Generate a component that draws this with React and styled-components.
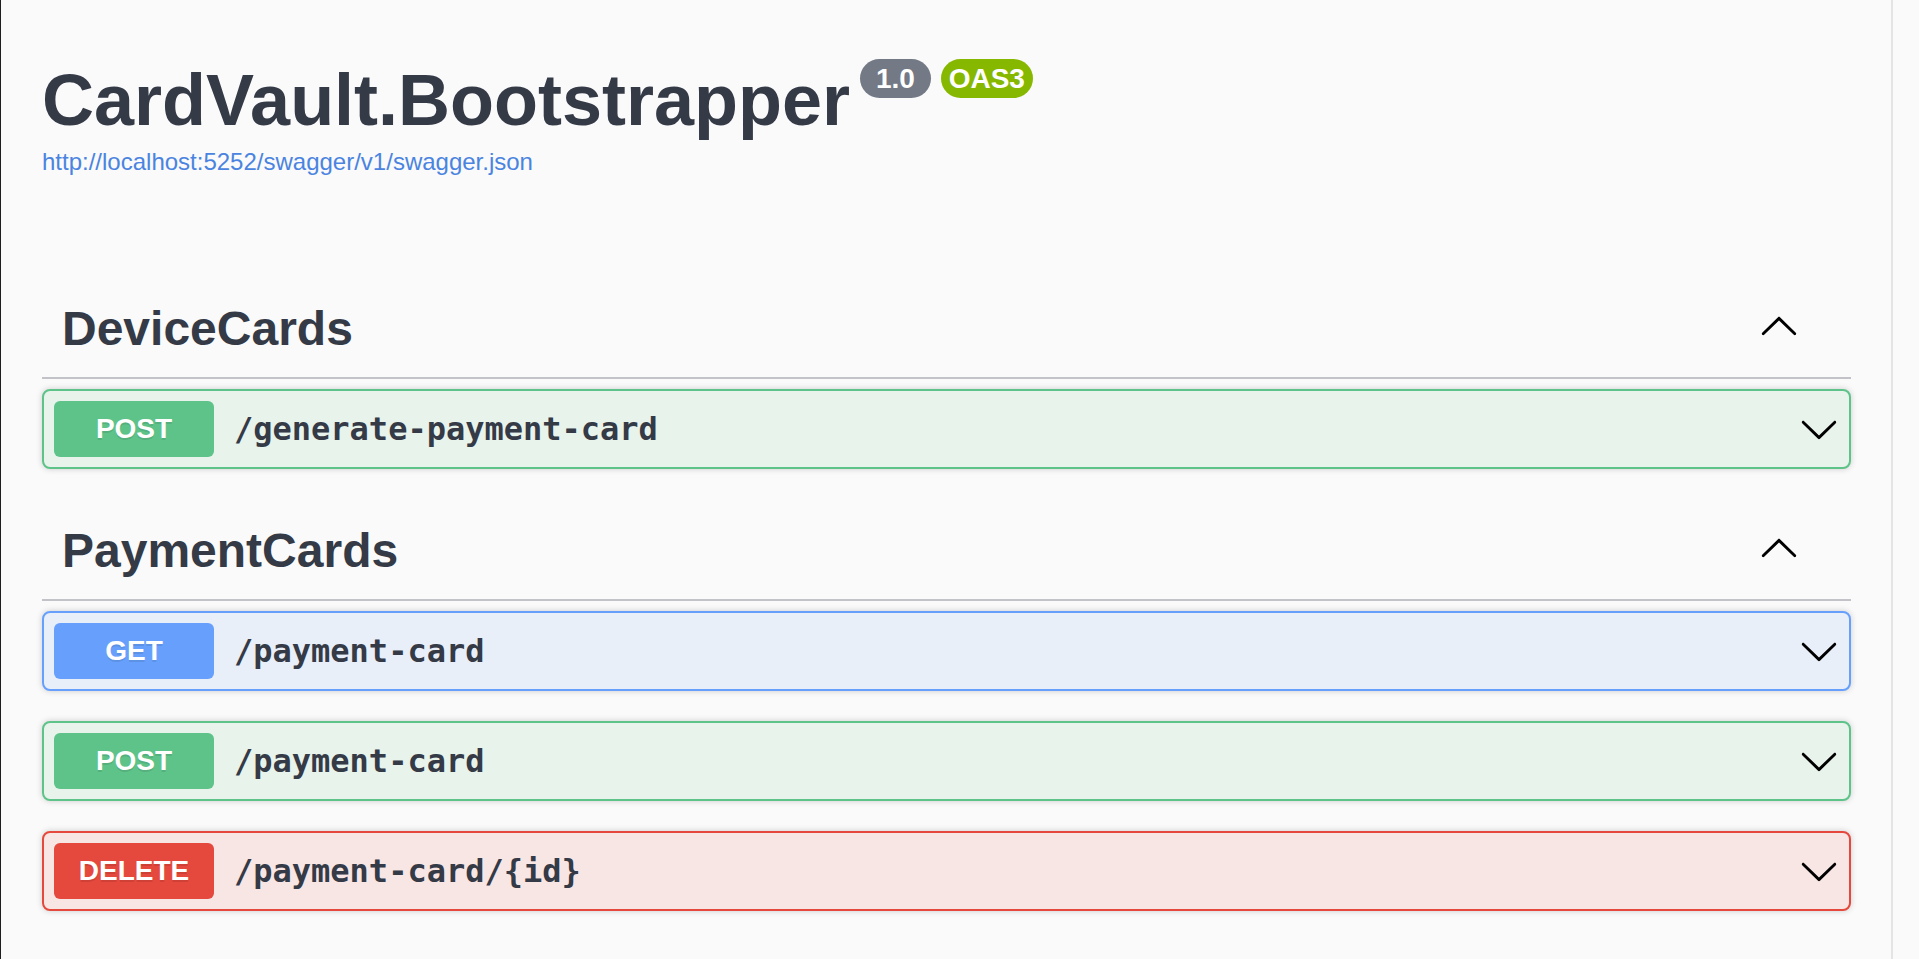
import React from "react";
import styled, { createGlobalStyle } from "styled-components";

const GlobalStyle = createGlobalStyle`
  html, body {
    margin: 0;
    padding: 0;
    background: #fafafa;
  }
  body {
    font-family: "Liberation Sans", Arial, Helvetica, sans-serif;
    color: #353a47;
  }
`;

const Page = styled.div`
  display: flex;
  min-height: 959px;
  border-left: 1px solid #1e1e1e;
  background: #fafafa;
`;

const Main = styled.main`
  flex: 1;
  min-width: 0;
  padding: 59px 40px 0 41px;
`;

const ScrollDivider = styled.div`
  width: 2px;
  background: #e4e4e4;
`;

const Gutter = styled.div`
  width: 26px;
`;

const Info = styled.header`
  display: flex;
  flex-direction: column;
  align-items: flex-start;
`;

const Title = styled.h2`
  margin: 0;
  display: flex;
  align-items: flex-start;
  font-size: 72px;
  line-height: 82px;
  font-weight: 700;
  color: #353a47;
`;

const Pill = styled.small`
  margin-left: 10px;
  padding: 4px 8px;
  border-radius: 57px;
  background: ${(p) => p.$bg};
  color: #ffffff;
  font-size: 28px;
  line-height: 31px;
  font-weight: 700;
  white-space: pre;
`;

const SpecLink = styled.a`
  margin-top: 7px;
  font-size: 24px;
  line-height: 28px;
  color: #4a84e0;
  text-decoration: none;
`;

const Sections = styled.div`
  margin-top: 101px;
`;

const TagHeader = styled.h3`
  margin: 0 0 10px;
  display: flex;
  align-items: center;
  height: 60px;
  padding: 20px 52px 20px 20px;
  border-bottom: 2px solid #c2c3c8;
  font-size: 48px;
  font-weight: 700;
  color: #353a47;
`;

const TagName = styled.span`
  flex: 1;
  padding-top: 2px;
  line-height: 55px;
`;

const Op = styled.div`
  display: flex;
  align-items: center;
  margin-bottom: 30px;
  padding: 10px;
  border: 2px solid ${(p) => p.$color};
  border-radius: 8px;
  background: ${(p) => p.$bg};
  box-shadow: 0 0 6px rgba(0, 0, 0, 0.19);
`;

const Method = styled.span`
  display: flex;
  align-items: center;
  justify-content: center;
  min-width: 160px;
  height: 56px;
  border-radius: 6px;
  background: ${(p) => p.$color};
  color: #ffffff;
  font-size: 28px;
  font-weight: 700;
  text-shadow: 0 2px 0 rgba(0, 0, 0, 0.1);
`;

const Path = styled.span`
  flex: 1;
  padding: 0 20px;
  font-family: "DejaVu Sans Mono", "Liberation Mono", monospace;
  font-size: 32px;
  font-weight: 700;
  color: #353a47;
`;

const Icon = styled.svg`
  flex: none;
  display: block;
`;

const downPath =
  "M17.418 6.109c.272-.268.709-.268.979 0s.271.701 0 .969l-7.908 7.83c-.27.268-.707.268-.979 0l-7.908-7.83c-.27-.268-.27-.701 0-.969.271-.268.709-.268.979 0L10 13.25l7.418-7.141z";

const Chevron = ({ up }) => (
  <Icon width="40" height="40" viewBox="0 0 20 20" aria-hidden="true">
    <path
      d={downPath}
      fill="#000"
      transform={up ? "rotate(180 10 10)" : undefined}
    />
  </Icon>
);

const METHODS = {
  POST: { color: "#5dc389", bg: "#e8f3ec" },
  GET: { color: "#67a0fc", bg: "#e8eff9" },
  DELETE: { color: "#e5483c", bg: "#f8e6e5" },
};

const tags = [
  {
    name: "DeviceCards",
    ops: [{ method: "POST", path: "/generate-payment-card" }],
  },
  {
    name: "PaymentCards",
    ops: [
      { method: "GET", path: "/payment-card" },
      { method: "POST", path: "/payment-card" },
      { method: "DELETE", path: "/payment-card/{id}" },
    ],
  },
];

export default function App() {
  return (
    <>
      <GlobalStyle />
      <Page>
        <Main>
          <Info>
            <Title>
              CardVault.Bootstrapper
              <Pill $bg="#737985">{" 1.0 "}</Pill>
              <Pill $bg="#87b800">OAS3</Pill>
            </Title>
            <SpecLink href="#">
              http://localhost:5252/swagger/v1/swagger.json
            </SpecLink>
          </Info>
          <Sections>
            {tags.map((tag) => (
              <section key={tag.name}>
                <TagHeader>
                  <TagName>{tag.name}</TagName>
                  <Chevron up />
                </TagHeader>
                {tag.ops.map((op) => (
                  <Op
                    key={op.method + op.path}
                    $color={METHODS[op.method].color}
                    $bg={METHODS[op.method].bg}
                  >
                    <Method $color={METHODS[op.method].color}>{op.method}</Method>
                    <Path>{op.path}</Path>
                    <Chevron />
                  </Op>
                ))}
              </section>
            ))}
          </Sections>
        </Main>
        <ScrollDivider />
        <Gutter />
      </Page>
    </>
  );
}
